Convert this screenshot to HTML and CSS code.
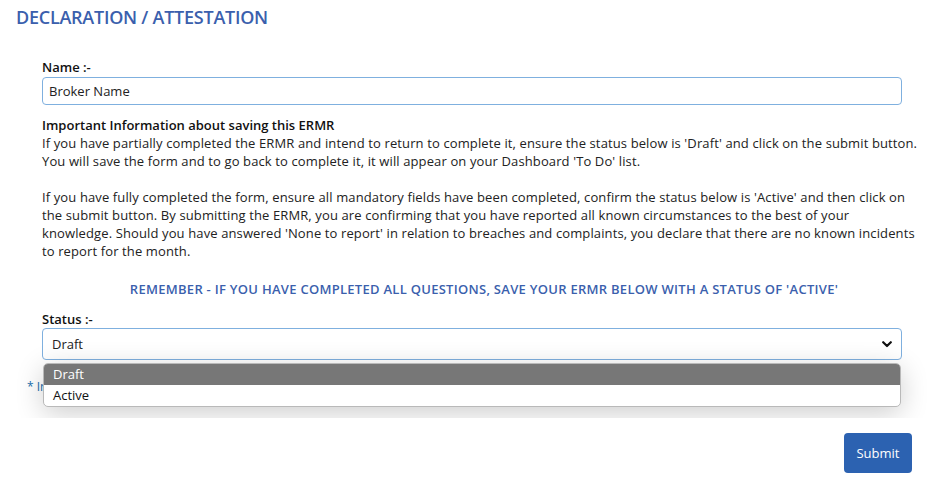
FILE: index.html
```html
<!DOCTYPE html>
<html lang="en">
<head>
<meta charset="utf-8">
<title>Declaration / Attestation</title>
<link rel="stylesheet" href="styles.css">
</head>
<body>
<div class="page">
  <section class="declaration">
    <h2 class="title">DECLARATION / ATTESTATION</h2>
    <div class="form">
      <label class="label">Name :-</label>
      <div class="input">Broker Name</div>
      <div class="info">
        <div class="info-head">Important Information about saving this ERMR</div>
        <p class="para">If you have partially completed the ERMR and intend to return to complete it, ensure the status below is 'Draft' and click on the submit button.<br>You will save the form and to go back to complete it, it will appear on your Dashboard 'To Do' list.</p>
        <p class="para">If you have fully completed the form, ensure all mandatory fields have been completed, confirm the status below is 'Active' and then click on<br>the submit button. By submitting the ERMR, you are confirming that you have reported all known circumstances to the best of your<br>knowledge. Should you have answered 'None to report' in relation to breaches and complaints, you declare that there are no known incidents<br>to report for the month.</p>
      </div>
      <div class="remember">REMEMBER - IF YOU HAVE COMPLETED ALL QUESTIONS, SAVE YOUR ERMR BELOW WITH A STATUS OF 'ACTIVE'</div>
      <label class="label">Status :-</label>
      <div class="select-wrap">
        <div class="select">
          <span>Draft</span>
          <svg class="chev" width="10" height="7" viewBox="0 0 10 7"><path d="M1.2 1.2 L5 5 L8.8 1.2" fill="none" stroke="#111" stroke-width="2.2" stroke-linecap="round" stroke-linejoin="round"/></svg>
        </div>
        <ul class="options">
          <li class="opt selected">Draft</li>
          <li class="opt">Active</li>
        </ul>
      </div>
    </div>
    <div class="mandatory">* Indicates mandatory fields</div>
  </section>
  <footer class="actions">
    <button class="submit" type="button">Submit</button>
  </footer>
</div>
</body>
</html>
```

FILE: styles.css
```css
html, body {
  margin: 0;
  padding: 0;
  background: #fff;
}
body {
  font-family: "Open Sans", "Noto Sans", sans-serif;
  font-size: 13px;
  color: #1f1f1f;
  width: 947px;
  height: 498px;
  overflow: hidden;
}
.page {
  display: flex;
  flex-direction: column;
}
.declaration {
  position: relative;
  padding: 5px 16px 0 16px;
  height: 413px;
}
.title {
  margin: 0;
  font-size: 18px;
  line-height: 24px;
  font-weight: 600;
  color: #3b5fad;
  letter-spacing: -0.25px;
}
.form {
  padding: 29px 29px 0 26px;
  display: flex;
  flex-direction: column;
}
.label {
  display: block;
  font-weight: 600;
  line-height: 18px;
  color: #111;
}
.input {
  margin-top: 1px;
  height: 26px;
  border: 1px solid #7fb0df;
  border-radius: 4px;
  padding: 0 6px;
  line-height: 26px;
  color: #222;
  width: 846px;
}
.info {
  margin-top: 11px;
  width: 900px;
}
.info-head {
  font-weight: 600;
  line-height: 18px;
  color: #111;
}
.para {
  margin: 0 0 18px 0;
  line-height: 18px;
  color: #222;
  letter-spacing: 0.12px;
}
.para:last-child {
  margin-bottom: 0;
}
.remember {
  margin-top: 20px;
  text-align: center;
  width: 884px;
  font-weight: 600;
  font-size: 13px;
  line-height: 18px;
  color: #3b5fad;
  letter-spacing: 0.28px;
}
.form .remember + .label {
  margin-top: 12px;
}
.select-wrap {
  position: relative;
  width: 860px;
}
.select {
  height: 30px;
  border: 1px solid #7fb0df;
  border-radius: 4px;
  padding: 0 9px 0 9px;
  display: flex;
  align-items: center;
  justify-content: space-between;
  color: #222;
}
.chev {
  display: block;
}
.options {
  position: absolute;
  left: 1px;
  top: 35px;
  width: 856px;
  margin: 0;
  padding: 0;
  list-style: none;
  background: #fff;
  border: 1px solid #b9b9b9;
  border-radius: 5px;
  overflow: hidden;
  box-shadow: 0 6px 28px rgba(0, 0, 0, 0.2);
  z-index: 5;
}
.opt {
  height: 21px;
  line-height: 21px;
  padding: 0 9px;
  color: #111;
}
.opt.selected {
  background: #777;
  color: #fff;
  font-weight: 500;
}
.mandatory {
  margin: 19px 0 0 11px;
  color: #1a6fae;
  font-size: 12px;
  line-height: 16px;
}
.actions {
  position: relative;
  z-index: 10;
  background: #fff;
  height: 85px;
  display: flex;
  justify-content: flex-end;
  align-items: flex-start;
  padding: 15px 35px 0 0;
}
.submit {
  width: 68px;
  height: 40px;
  border: none;
  border-radius: 4px;
  background: #2c62b1;
  color: #fff;
  font-family: inherit;
  font-size: 13px;
  padding: 0;
}
```
